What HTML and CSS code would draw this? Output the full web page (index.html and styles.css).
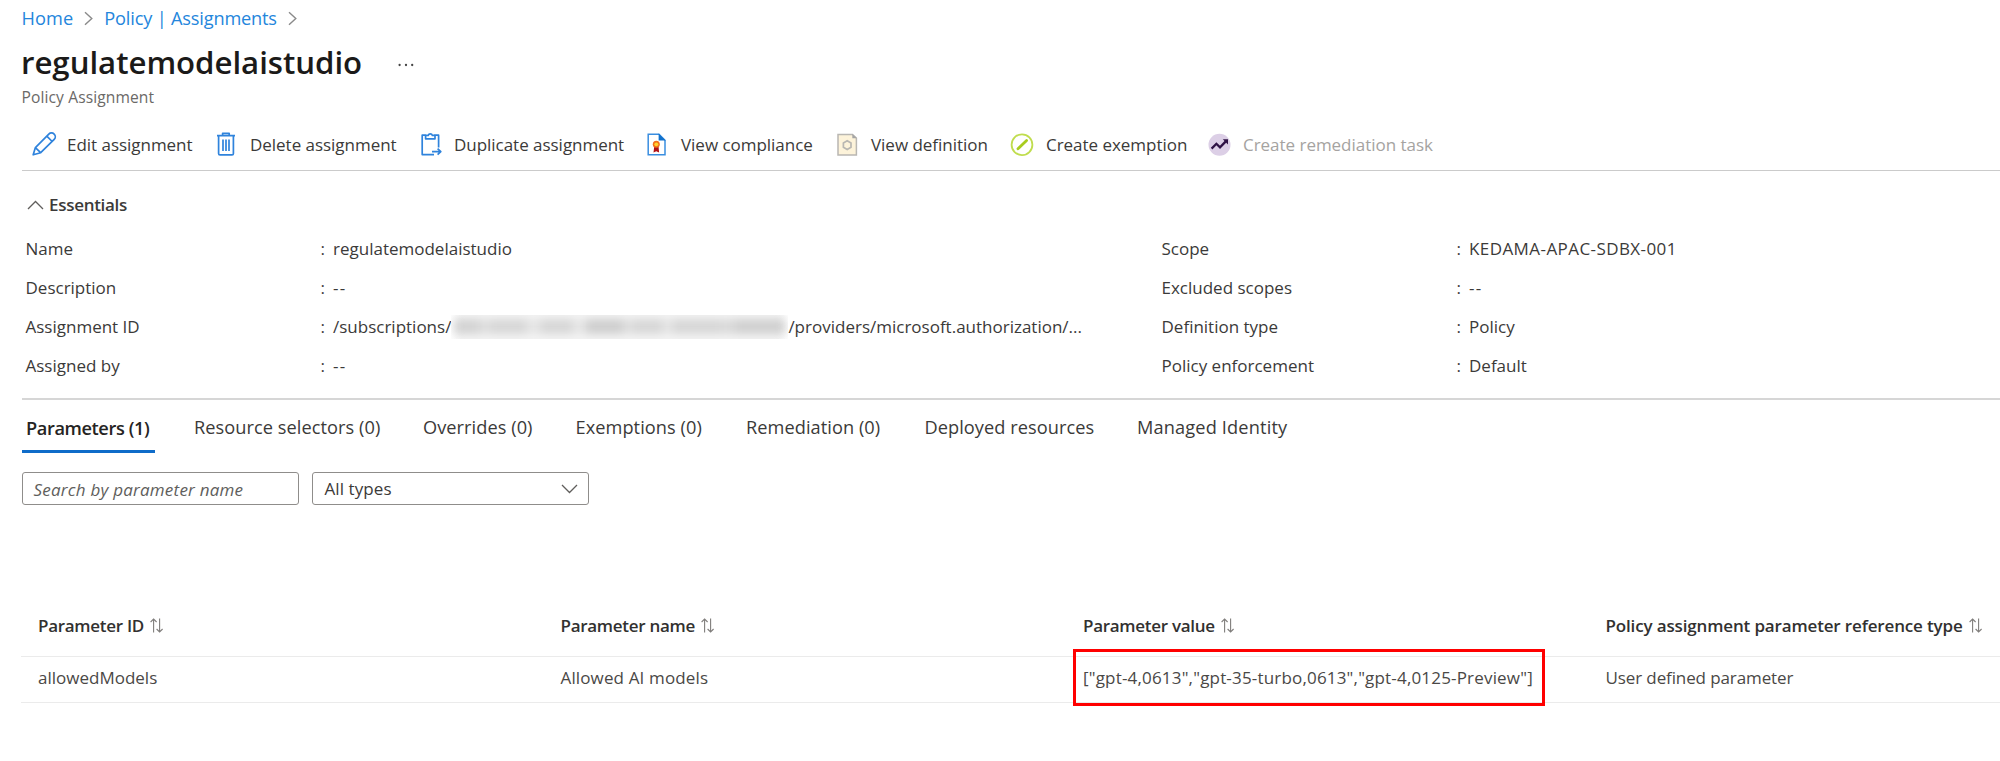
FILE: index.html
```html
<!DOCTYPE html>
<html lang="en">
<head>
<meta charset="utf-8">
<title>regulatemodelaistudio - Policy Assignment</title>
<link rel="stylesheet" href="styles.css">
</head>
<body>
<nav class="breadcrumb">
  <a class="crumb">Home</a>
  <svg class="crumb-sep" viewBox="0 0 9 15"><path d="M1 1.2 7.8 7.5 1 13.8"/></svg>
  <a class="crumb crumb-tight">Policy | Assignments</a>
  <svg class="crumb-sep" viewBox="0 0 9 15"><path d="M1 1.2 7.8 7.5 1 13.8"/></svg>
</nav>
<header class="header">
  <h1 class="title">regulatemodelaistudio</h1>
  <svg class="more" viewBox="0 0 18 4"><circle cx="2.6" cy="2" r="1.15"/><circle cx="9" cy="2" r="1.15"/><circle cx="15.2" cy="2" r="1.15"/></svg>
</header>
<div class="subtitle">Policy Assignment</div>

<div class="toolbar">
  <div class="command">
    <svg class="icon blue" viewBox="0 0 24 24"><path d="M2.2 22.8 4.4 15.6 17.8 2.1a3.6 3.6 0 0 1 5.4 5.3L9.7 20.7ZM15.8 4.2l5.4 5.3M4.4 15.6l5.2 5.1"/></svg>
    <span>Edit assignment</span>
  </div>
  <div class="command">
    <svg class="icon blue" viewBox="0 0 24 24"><path d="M3 3.6H21M8.6 3.4V1.4h6.6v2M4.600 3.8V21.400q0 1.400 1.400 1.400H18q1.400 0 1.400-1.400V3.800M9 7.600V19M12 7.600V19M15 7.600V19"/></svg>
    <span>Delete assignment</span>
  </div>
  <div class="command">
    <svg class="icon blue" viewBox="0 0 24 24"><path d="M16 22.600H4.200V3.200H8M16 3.200h4.600V15.500M7.600 6.800V3.400h2.600a2.200 2.200 0 0 1 4.200 0h2.600v3.400ZM14 19.700h8.600M19.600 16.700l3.200 3-3.200 3"/></svg>
    <span>Duplicate assignment</span>
  </div>
  <div class="command">
    <svg class="icon" viewBox="0 0 24 24">
      <path d="M3.200 2.300H14L20 8.200V22.800H3.200Z" fill="#fff" stroke="#3a8ee0" stroke-width="1.500"/>
      <path d="M13.600 1.600 20.700 8.500H13.600Z" fill="#1272cc"/>
      <path d="M9.300 14h4.200l.6 6.500-2.800-1.300-2.800 1.300Z" fill="#b01015"/>
      <circle cx="11.300" cy="12.300" r="3.500" fill="#f2701a"/><circle cx="11.300" cy="12.300" r="1.900" fill="#ffd02e"/>
    </svg>
    <span>View compliance</span>
  </div>
  <div class="command">
    <svg class="icon" viewBox="0 0 24 24">
      <path d="M3 2.400H17.500L21.400 6V23H3Z" fill="#fdf3da" stroke="#b9b7b2" stroke-width="1.500"/>
      <path d="M17.300 2V6.200H21.800Z" fill="#a5a5a5"/>
      <path d="M12.200 8.700 16 10.900V15.300L12.200 17.500 8.400 15.300V10.900Z" fill="none" stroke="#b9b7b2" stroke-width="1.700"/>
    </svg>
    <span>View definition</span>
  </div>
  <div class="command">
    <svg class="icon" viewBox="0 0 24 24">
      <circle cx="12" cy="12.700" r="10.400" fill="#fff" stroke="#c0dd4e" stroke-width="1.800"/>
      <path d="M8 16.800 16.600 8.400" stroke="#a8cc1e" stroke-width="2.800" stroke-linecap="round"/>
    </svg>
    <span>Create exemption</span>
  </div>
  <div class="command disabled">
    <svg class="icon" viewBox="0 0 24 24">
      <circle cx="12.500" cy="12.700" r="11" fill="#dccfe6"/>
      <path d="M4.600 16.600 9.400 11.800 13 15.300 18.800 9.400" fill="none" stroke="#2f1245" stroke-width="2.300"/>
      <path d="M15.800 7.300H21V12.500Z" fill="#2f1245"/>
    </svg>
    <span>Create remediation task</span>
  </div>
</div>

<section class="essentials">
  <div class="essentials-head">
    <svg class="chevron-up" viewBox="0 0 17 10"><path d="M1 9 8.500 1.500 16 9"/></svg>
    <span>Essentials</span>
  </div>
  <div class="essentials-grid">
    <div class="label">Name</div><div class="colon">:</div><div class="value">regulatemodelaistudio</div>
    <div class="label">Scope</div><div class="colon">:</div><div class="value caps">KEDAMA-APAC-SDBX-001</div>
    <div class="label">Description</div><div class="colon">:</div><div class="value dashes">--</div>
    <div class="label">Excluded scopes</div><div class="colon">:</div><div class="value dashes">--</div>
    <div class="label">Assignment ID</div><div class="colon">:</div>
    <div class="value path"><span>/subscriptions/</span><span class="redacted"><i></i></span><span>/providers/microsoft.authorization/...</span></div>
    <div class="label">Definition type</div><div class="colon">:</div><div class="value">Policy</div>
    <div class="label">Assigned by</div><div class="colon">:</div><div class="value dashes">--</div>
    <div class="label">Policy enforcement</div><div class="colon">:</div><div class="value">Default</div>
  </div>
</section>

<div class="tabs">
  <div class="tab selected">Parameters (1)</div>
  <div class="tab">Resource selectors (0)</div>
  <div class="tab">Overrides (0)</div>
  <div class="tab">Exemptions (0)</div>
  <div class="tab">Remediation (0)</div>
  <div class="tab">Deployed resources</div>
  <div class="tab identity">Managed Identity</div>
</div>

<div class="filters">
  <div class="field search">Search by parameter name</div>
  <div class="field select"><span>All types</span><svg class="chevron-down" viewBox="0 0 17 10"><path d="M1 1 8.500 8.500 16 1"/></svg></div>
</div>

<div class="table">
  <div class="row head">
    <div class="cell"><span>Parameter ID</span><svg class="sort" viewBox="0 0 13 15"><path d="M3.600 14.500V1M.6 4 3.600 1 6.600 4M9.600 .5V14M6.600 11l3 3 3-3"/></svg></div>
    <div class="cell"><span>Parameter name</span><svg class="sort" viewBox="0 0 13 15"><path d="M3.600 14.500V1M.6 4 3.600 1 6.600 4M9.600 .5V14M6.600 11l3 3 3-3"/></svg></div>
    <div class="cell"><span>Parameter value</span><svg class="sort" viewBox="0 0 13 15"><path d="M3.600 14.500V1M.6 4 3.600 1 6.600 4M9.600 .5V14M6.600 11l3 3 3-3"/></svg></div>
    <div class="cell wide"><span>Policy assignment parameter reference type</span><svg class="sort" viewBox="0 0 13 15"><path d="M3.600 14.500V1M.6 4 3.600 1 6.600 4M9.600 .5V14M6.600 11l3 3 3-3"/></svg></div>
  </div>
  <div class="row body">
    <div class="cell">allowedModels</div>
    <div class="cell loose">Allowed AI models</div>
    <div class="cell json">["gpt-4,0613","gpt-35-turbo,0613","gpt-4,0125-Preview"]<div class="callout"></div></div>
    <div class="cell snug">User defined parameter</div>
  </div>
</div>
</body>
</html>
```

FILE: styles.css
```css
* { box-sizing: border-box; }

body {
  margin: 0;
  height: 761px;
  overflow: hidden;
  background: #fff;
  color: #3b3a39;
  font-family: "Open Sans", "Noto Sans", sans-serif;
  font-size: 17px;
  white-space: nowrap;
}

svg { flex: none; overflow: visible; }

/* Breadcrumb and title */
.breadcrumb { display: flex; align-items: center; height: 36px; padding-left: 21.5px; font-size: 18.2px; color: #2486dc; }
.crumb { letter-spacing: 0.1px; }
.crumb-tight { letter-spacing: -0.18px; }
.crumb-sep { width: 9px; height: 15px; margin: 0 11px; fill: none; stroke: #8a8a8a; stroke-width: 1.4; }
.header { display: flex; align-items: center; height: 52px; padding-left: 21px; }
.title { margin: 0; font-size: 31.2px; font-weight: 600; line-height: 52px; letter-spacing: -0.03px; color: #1b1a19; }
.more { width: 18px; height: 4px; margin: 5px 0 0 35px; fill: #444; }
.subtitle { height: 18px; padding-left: 21.5px; font-size: 15.6px; line-height: 18px; letter-spacing: 0.1px; color: #6b6967; }

/* Command bar */
.toolbar {
  display: grid;
  grid-template-columns: 183px 204px 227px 190px 175px 197px auto;
  height: 50px;
  margin: 15px 0 0 21.5px;
  padding-left: 9.5px;
  border-bottom: 1px solid #cbcbcb;
  letter-spacing: -0.03px;
}
.command { display: flex; align-items: center; gap: 12px; }
.command span { margin-bottom: 2px; }
.disabled { color: #a5a3a1; }
.icon { width: 24px; height: 24px; margin-bottom: 4px; }
.blue { fill: none; stroke: #2f83dc; stroke-width: 1.7; stroke-linejoin: round; }

/* Essentials */
.essentials { margin-left: 21.5px; padding: 8px 0 13px; border-bottom: 2px solid #d6d6d6; }
.essentials-head { display: flex; align-items: center; gap: 5.5px; height: 50px; padding-left: 5px; font-weight: 600; letter-spacing: -0.3px; }
.chevron-up, .chevron-down { width: 17px; height: 10px; fill: none; stroke: #605e5c; stroke-width: 1.3; }
.chevron-up { margin-top: 2px; }
.essentials-grid {
  display: grid;
  grid-template-columns: 295px 12.5px 828.5px 295px 12.5px auto;
  grid-auto-rows: 39px;
  padding-left: 4px;
  line-height: 39px;
}
.caps { letter-spacing: 0.42px; }
.dashes { letter-spacing: 1.4px; }
.path { display: flex; align-items: center; }
.redacted { width: 337px; height: 24px; padding: 4px 3px; overflow: hidden; background: linear-gradient(90deg, #fff, #f5f5f5 3%, #f5f5f5 97%, #fff); }
.redacted i {
  display: block;
  height: 15px;
  filter: blur(5px);
  background: linear-gradient(90deg, #d2d2d2 0 8%, #dedede 8% 11%, #d6d6d6 11% 22%, #e6e6e6 22% 26%, #d6d6d6 26% 36%, #e6e6e6 36% 40%, #cdcdcd 40% 51%, #dedede 51% 54%, #d6d6d6 54% 63%, #e6e6e6 63% 66%, #d6d6d6 66% 80%, #d9d9d9 80% 85%, #cfcfcf 85% 100%);
}

/* Tabs */
.tabs {
  display: grid;
  grid-template-columns: 172px 229px 152.5px 170.5px 178.5px 212.5px auto;
  height: 53px;
  padding-left: 22px;
  font-size: 18.2px;
  line-height: 55px;
  letter-spacing: 0.06px;
}
.identity { letter-spacing: 0.15px; }
.selected {
  width: 133px;
  height: 53px;
  padding: 5px 0 0 4px;
  border-bottom: 3px solid #0f6cc9;
  line-height: 47px;
  font-weight: 600;
  letter-spacing: -0.4px;
  color: #252423;
}

/* Filters */
.filters { display: flex; gap: 13px; margin: 19px 0 0 21.5px; }
.field { width: 277px; height: 33px; padding-left: 12px; border: 1.5px solid #8f8d8b; border-radius: 3px; line-height: 31px; }
.search { padding: 1px 0 0 11px; font-style: italic; letter-spacing: 0.23px; color: #605e5c; }
.select { display: flex; justify-content: space-between; align-items: center; padding-right: 10px; letter-spacing: 0.09px; }

/* Parameters table */
.table { margin: 90px 0 0 21px; }
.row { display: grid; grid-template-columns: 522.5px 522.5px 522.5px auto; border-bottom: 1px solid #ebebeb; }
.cell { position: relative; padding-left: 17px; }
.head { height: 62px; line-height: 61px; font-weight: 600; letter-spacing: -0.29px; color: #323130; }
.head .cell { display: flex; align-items: center; gap: 6px; }
.head .wide { letter-spacing: -0.15px; }
.sort { width: 13px; height: 15px; fill: none; stroke: #807e7c; stroke-width: 1.1; }
.body { height: 46px; line-height: 41px; color: #4a4846; }
.loose { letter-spacing: 0.14px; }
.json { letter-spacing: 0.18px; }
.snug { letter-spacing: -0.11px; }
.callout { position: absolute; left: 7px; top: -8px; width: 472px; height: 57px; border: 3px solid #f00; }
```
